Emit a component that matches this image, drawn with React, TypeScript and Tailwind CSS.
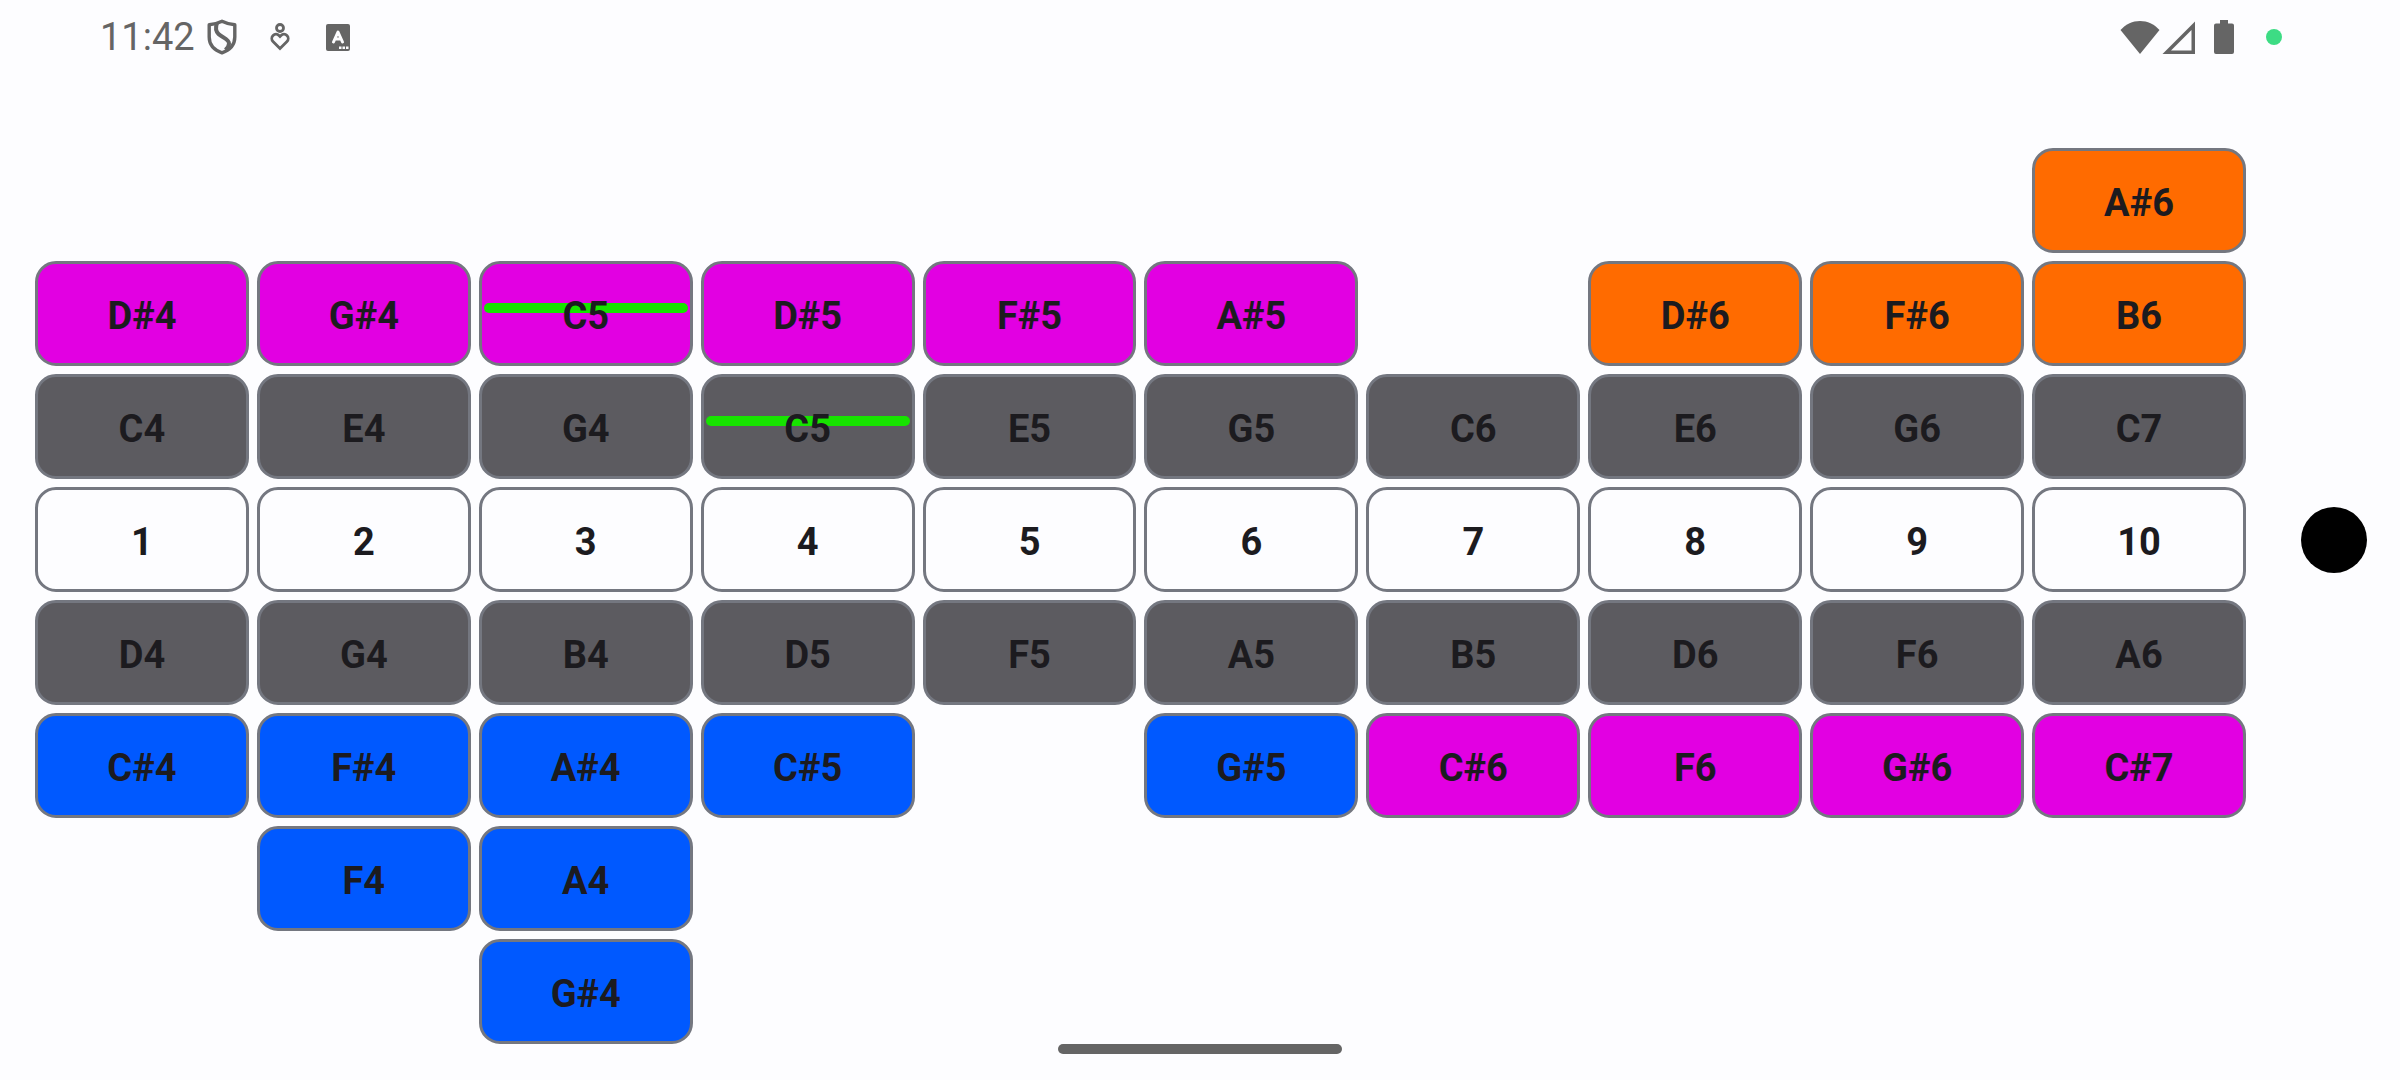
type Tone = "orange" | "magenta" | "gray" | "plain" | "blue";

type Cell = { label: string; tone: Tone; marked?: boolean } | null;

const TONES: Record<Tone, string> = {
  orange: "bg-[#ff6b00]",
  magenta: "bg-[#e200e2]",
  gray: "bg-[#5c5b60]",
  plain: "bg-[#fdfdff]",
  blue: "bg-[#0059ff]",
};

const row = (tone: Tone, labels: string): Cell[] =>
  labels.split(" ").map((label) => (label === "-" ? null : { label, tone }));

const mark = (cells: Cell[], index: number): Cell[] =>
  cells.map((cell, i) => (cell && i === index ? { ...cell, marked: true } : cell));

const ROWS: Cell[][] = [
  row("orange", "- - - - - - - - - A#6"),
  [
    ...mark(row("magenta", "D#4 G#4 C5 D#5 F#5 A#5 -"), 2),
    ...row("orange", "D#6 F#6 B6"),
  ],
  mark(row("gray", "C4 E4 G4 C5 E5 G5 C6 E6 G6 C7"), 3),
  row("plain", "1 2 3 4 5 6 7 8 9 10"),
  row("gray", "D4 G4 B4 D5 F5 A5 B5 D6 F6 A6"),
  [...row("blue", "C#4 F#4 A#4 C#5 - G#5"), ...row("magenta", "C#6 F6 G#6 C#7")],
  row("blue", "- F4 A4 - - - - - - -"),
  row("blue", "- - G#4 - - - - - - -"),
];

function NoteCell({ cell }: { cell: Cell }) {
  if (!cell) return <div />;
  return (
    <div
      className={`relative flex items-center justify-center rounded-[21px] border-3 border-[#747780] ${TONES[cell.tone]}`}
    >
      {cell.marked && (
        <span className="absolute inset-x-0.5 top-[39px] h-2.5 rounded-full bg-[#17e300]" />
      )}
      <span className="relative pt-1 text-[38px] leading-none font-bold text-[#1c1b1f]">
        {cell.label}
      </span>
    </div>
  );
}

function StatusBar() {
  return (
    <header className="flex h-[74px] items-center justify-between pr-[118px] pl-[100px] text-[#656565]">
      <div className="flex items-center">
        <time className="w-[107px] text-[38px] leading-none">11:42</time>
        <svg className="h-9 w-[30px]" viewBox="0 0 30 36" fill="none" stroke="currentColor">
          <path
            d="M15 2.2C11 4.2 6.500 5.500 2.200 5.800V18C2.200 25.500 7 31 15 33.800C23 31 27.800 25.500 27.800 18V5.800C23.500 5.500 19 4.200 15 2.200Z"
            strokeWidth="3.400"
            strokeLinejoin="round"
          />
          <path d="M10 4C8.500 8 8.500 12 11.500 15C15 18.500 22 20 22 24.500C22 26.500 20.500 29 18.500 31" strokeWidth="4" />
        </svg>
        <svg className="ml-8 h-8 w-[22px]" viewBox="0 0 22 32" fill="none" stroke="currentColor" strokeWidth="2.800">
          <circle cx="11" cy="7" r="3.500" />
          <path d="M11 27.500L4 20.400A4.200 4.200 0 0 1 10 14.500L11 15.500L12 14.500A4.200 4.200 0 0 1 18 20.400Z" />
        </svg>
        <svg className="ml-[35px] h-[27px] w-6" viewBox="0 0 24 27">
          <rect width="24" height="27" rx="2" fill="currentColor" />
          <path d="M7.500 18L12 8L16.500 18M9 15H15" fill="none" stroke="#fdfdff" strokeWidth="3" strokeLinecap="round" strokeLinejoin="round" />
          <path d="M13 22.500H15.500V25H13ZM16.500 22.500H19V25H16.500ZM20 22.500H22.500V25H20Z" fill="#fdfdff" />
        </svg>
      </div>
      <div className="flex items-center">
        <svg className="h-[33px] w-10" viewBox="0 0 40 33" fill="currentColor">
          <path d="M20 33L0.500 9C6 3 12.500 0 20 0S34 3 39.500 9Z" />
        </svg>
        <svg className="ml-0.5 h-[33px] w-[33px]" viewBox="0 0 33 33" fill="currentColor" fillRule="evenodd">
          <path d="M0.500 33H33V0.500ZM9 29.500L29.500 9V29.500Z" />
        </svg>
        <svg className="ml-[19px] h-[34px] w-5" viewBox="0 0 20 34" fill="currentColor">
          <path d="M6 0H14V3.500H18Q20 3.500 20 5.500V32Q20 34 18 34H2Q0 34 0 32V5.500Q0 3.500 2 3.500H6Z" />
        </svg>
        <span className="ml-8 size-4 rounded-full bg-[#3ddc84]" />
      </div>
    </header>
  );
}

export default function App() {
  return (
    <div className="relative flex min-h-screen flex-col bg-[#fdfdff] font-['Roboto',sans-serif]">
      <StatusBar />
      <main className="mt-[74px] grid auto-rows-[105px] grid-cols-10 gap-2 pr-[154px] pl-[35px]">
        {ROWS.flatMap((cells, r) => cells.map((cell, c) => <NoteCell key={`${r}-${c}`} cell={cell} />))}
      </main>
      <div className="h-2.5 w-[284px] self-center rounded-full bg-[#656565]" />
      <div className="absolute top-1/2 right-[33px] size-[66px] -translate-y-1/2 rounded-full bg-black" />
    </div>
  );
}
